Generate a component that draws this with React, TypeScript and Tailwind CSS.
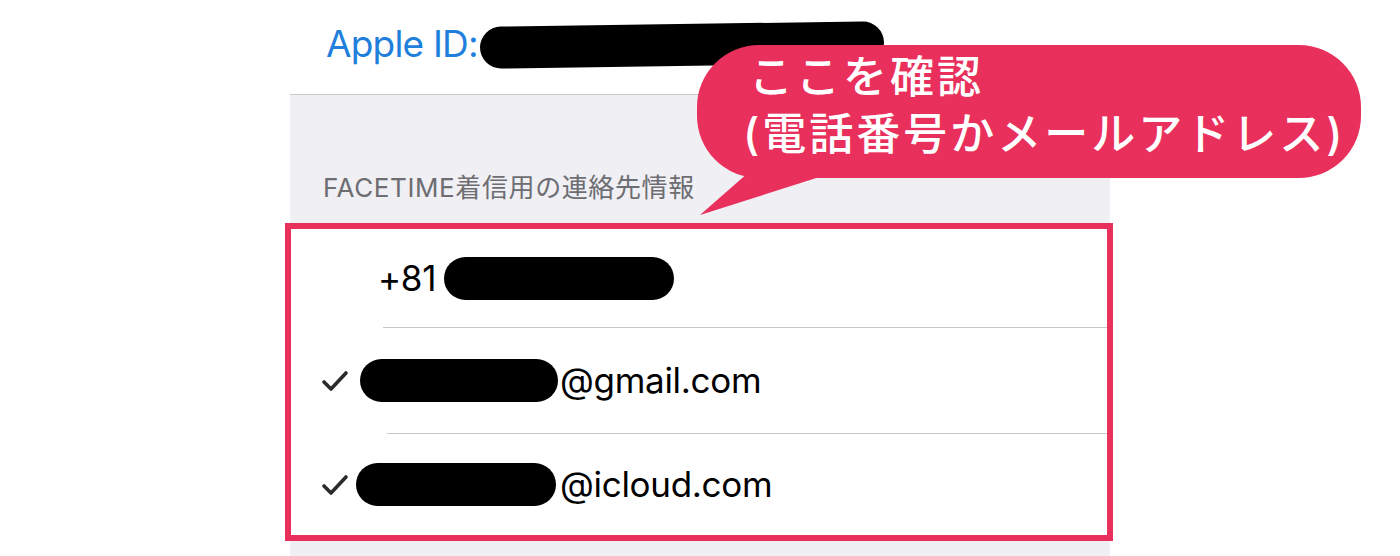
const Check = () => (
  <svg width="28" height="24" viewBox="0 0 28 24" className="shrink-0">
    <path d="M3 13 L10 20 L25 4" fill="none" stroke="#2b2b2b" strokeWidth="3.6" strokeLinecap="round" strokeLinejoin="round" />
  </svg>
);

const Pill = ({ w }: { w: number }) => (
  <div className="h-[43px] rounded-full bg-black shrink-0" style={{ width: w }} />
);

export default function App() {
  return (
    <div className="relative w-[1400px] h-[556px] bg-white overflow-hidden font-['Inter','Noto_Sans_CJK_JP',sans-serif]">
      <div className="ml-[290px] w-[820px] flex flex-col h-full">
        {/* Apple ID */}
        <div className="h-[95px] flex items-center pl-[36px] pb-[8px] border-b border-[#c8c7cc]">
          <span className="text-[37px] text-[#1f7fdc] tracking-[-0.8px] leading-none">Apple ID:</span>
          <div className="ml-[2px] mt-[4px] h-[42px] w-[404px] rounded-full bg-black -rotate-[0.8deg]" />
        </div>

        {/* section header */}
        <div className="h-[128px] bg-[#efeff4] flex items-end pl-[33px] pb-[22px]">
          <span className="text-[26px] tracking-[0.6px] text-[#6d6d72] leading-none">
            FACETIME着信用の連絡先情報
          </span>
        </div>

        {/* highlighted list */}
        <div className="ml-[-5px] mr-[-3px] border-[6px] border-[#e9305c] bg-white flex flex-col">
          <div className="h-[98px] flex items-center pl-[87px]">
            <span className="text-[35px] tracking-[-0.3px] text-black leading-none">+81</span>
            <div className="ml-[8px]">
              <Pill w={230} />
            </div>
          </div>
          <div className="ml-[92px] h-px bg-[#c8c7cc]" />
          <div className="h-[105px] flex items-center pl-[30px]">
            <Check />
            <div className="ml-[11px]">
              <Pill w={198} />
            </div>
            <span className="ml-[2px] text-[35px] tracking-[-0.3px] text-black leading-none">@gmail.com</span>
          </div>
          <div className="ml-[96px] h-px bg-[#c8c7cc]" />
          <div className="h-[101px] flex items-center pl-[30px]">
            <Check />
            <div className="ml-[7px]">
              <Pill w={200} />
            </div>
            <span className="ml-[4px] text-[35px] tracking-[-0.3px] text-black leading-none">@icloud.com</span>
          </div>
        </div>

        <div className="flex-1 bg-[#efeff4]" />
      </div>

      {/* speech bubble */}
      <div className="absolute left-[697px] top-[45px] w-[664px] h-[133px]">
        <svg width="160" height="180" viewBox="0 0 160 180" className="absolute left-0 top-0 overflow-visible">
          <path d="M60 120 L3 170 L135 128 Z" fill="#e9305c" />
        </svg>
        <div className="relative w-full h-full rounded-[62px] bg-[#e9305c] pl-[52px] pt-[4px] text-white font-['Inter','Noto_Sans_CJK_JP',sans-serif] font-medium text-[44px] tracking-[3px] leading-[57px]">
          <div>ここを確認</div>
          <div className="-ml-[6px]">(電話番号かメールアドレス)</div>
        </div>
      </div>
    </div>
  );
}
